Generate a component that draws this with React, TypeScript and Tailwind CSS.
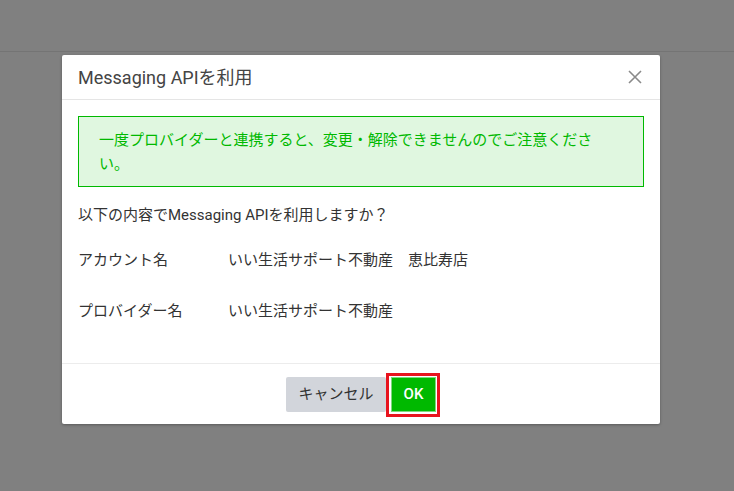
import { useState } from "react";

const font = { fontFamily: 'Roboto, "Noto Sans CJK JP", sans-serif' };

function InfoRow({ label, value, className = "" }: { label: string; value: string; className?: string }) {
  return (
    <div className={`flex leading-6 ${className}`}>
      <div className="w-[150px] shrink-0">{label}</div>
      <div>{value}</div>
    </div>
  );
}

export default function App() {
  const [open, setOpen] = useState(true);

  return (
    <div style={font} className="min-h-screen w-full bg-[#808080] text-[15px] text-[#333]">
      <div className="h-[52px] border-b border-[#747474]" />

      {open && (
        <div className="mt-[3px] ml-[62px] w-[598px] rounded-[2px] bg-white shadow-[0_1px_3px_rgba(0,0,0,0.3)]">
          <div className="flex h-[45px] items-center justify-between border-b border-[#e5e5e5] pl-4 pr-[17px]">
            <div className="text-[18px] text-[#444]">Messaging APIを利用</div>
            <button onClick={() => setOpen(false)} className="flex h-[16px] w-[16px] items-center justify-center">
              <svg width="14" height="14" viewBox="0 0 14 14" fill="none" stroke="#8a8a8a" strokeWidth="1.6">
                <path d="M1 1L13 13M13 1L1 13" />
              </svg>
            </button>
          </div>

          <div className="px-4 pt-4 pb-10">
            <div className="border border-[#00b900] bg-[#e0f7e0] pt-[11px] pb-[10px] pl-5 pr-10 leading-6 text-[#00b900]">
              一度プロバイダーと連携すると、変更・解除できませんのでご注意ください。
            </div>
            <div className="mt-4 leading-6">以下の内容でMessaging APIを利用しますか？</div>
            <InfoRow className="mt-[21px]" label="アカウント名" value="いい生活サポート不動産　恵比寿店" />
            <InfoRow className="mt-[27px]" label="プロバイダー名" value="いい生活サポート不動産" />
          </div>

          <div className="flex h-[61px] items-center justify-center gap-[5px] border-t border-[#ececec]">
            <button onClick={() => setOpen(false)} className="h-[35px] w-[100px] rounded-[2px] bg-[#d2d5db] text-[#333]">
              キャンセル
            </button>
            <div className="relative">
              <button className="h-[35px] w-[45px] border border-[#7fd87f] bg-[#00b900] font-medium text-white">
                OK
              </button>
              <div className="pointer-events-none absolute -top-[4px] -bottom-[5px] -left-[5px] -right-[4px] border-[3px] border-[#e8141e]" />
            </div>
          </div>
        </div>
      )}
    </div>
  );
}
